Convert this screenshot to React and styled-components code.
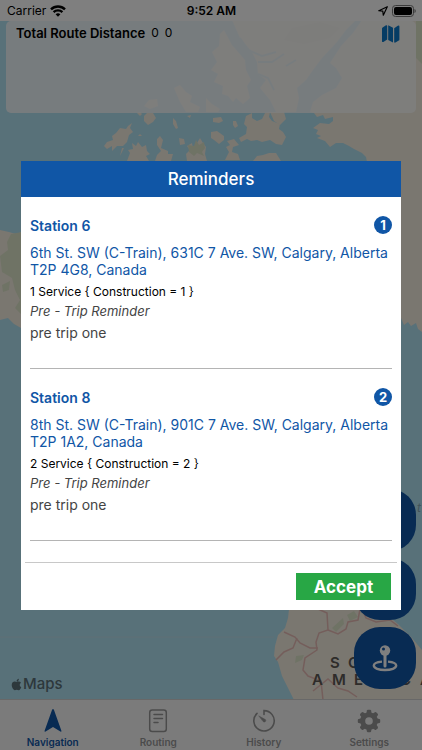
import React from 'react'
import styled, { createGlobalStyle, css } from 'styled-components'
import { FaApple } from 'react-icons/fa'

const colors = {
  brand: '#1056a6',
  water: '#b0e2f3',
  land: '#f4eee1',
  green: '#28a745',
  grey: '#979797'
}

const GlobalStyle = createGlobalStyle`
  * {
    box-sizing: border-box;
  }

  body {
    font-family: Inter, 'Liberation Sans', sans-serif;
    margin: 0;
  }

  h1, h2, p, ul, hr {
    margin: 0;
    padding: 0;
  }

  button {
    border: 0;
    cursor: pointer;
    font-family: inherit;
    padding: 0;
  }
`

const Screen = styled.div`
  background: ${colors.water};
  display: flex;
  flex-direction: column;
  min-height: 100vh;
  overflow: hidden;
  position: relative;
`

const MapCanvas = styled.svg`
  height: 100%;
  inset: 0;
  position: absolute;
  width: 100%;
`

const StatusBar = styled.header`
  align-items: center;
  background: #fff;
  color: #000;
  display: grid;
  font-size: 12px;
  grid-template-columns: 1fr auto 1fr;
  height: 21px;
  padding: 0 6px 0 7px;
  position: relative;
`

const StatusGroup = styled.div`
  align-items: center;
  display: flex;
  gap: 4px;
  justify-content: ${props => (props.$end ? 'flex-end' : 'flex-start')};
`

const Clock = styled.time`
  font-weight: 600;
`

const RouteCard = styled.section`
  background: rgba(255, 255, 255, 0.8);
  border-radius: 5px;
  display: flex;
  font-size: 13px;
  height: 92px;
  justify-content: space-between;
  line-height: 16px;
  margin: 0 6px;
  padding: 4px 16px 0 10px;
  position: relative;
`

const RouteDistance = styled.p`
  display: flex;
  gap: 6px;

  & > strong {
    font-weight: 600;
  }

  & > span {
    font-size: 12px;
  }
`

const MapButton = styled.button`
  background: none;
  color: #0a78c8;
  height: 18px;
  width: 18px;
`

const MapArea = styled.main`
  align-items: flex-end;
  display: flex;
  flex: 1;
  justify-content: space-between;
  padding: 0 6px 10px 10px;
  position: relative;
`

const MapCredit = styled.a`
  align-items: center;
  color: #5b7078;
  display: flex;
  font-size: 15px;
  font-weight: 500;
  line-height: 18px;
  margin-bottom: -4px;
  text-decoration: none;
`

const Fabs = styled.div`
  display: flex;
  flex-direction: column;
  gap: 7px;
`

const Fab = styled.button`
  align-items: center;
  background: ${colors.brand};
  border-radius: 26px;
  color: #fff;
  display: flex;
  height: 62px;
  justify-content: center;
  width: 62px;
`

const TabBar = styled.nav`
  background: #f7f7f7;
  border-top: 1px solid #d0d0d0;
  display: grid;
  grid-template-columns: repeat(4, 1fr);
  height: 51px;
  position: relative;
`

const Tab = styled.a`
  align-items: center;
  color: ${props => (props.$active ? colors.brand : colors.grey)};
  display: flex;
  flex-direction: column;
  font-size: 10px;
  font-weight: 600;
  gap: 3px;
  line-height: 12px;
  padding-top: 9px;
  text-decoration: none;
`

const Backdrop = styled.div`
  align-items: center;
  background: rgba(0, 0, 0, 0.5);
  display: flex;
  inset: 0;
  justify-content: center;
  padding: 21px 21px 0;
  position: absolute;
`

const Dialog = styled.div`
  background: #fff;
  width: 100%;
`

const DialogTitle = styled.h1`
  background: ${colors.brand};
  color: #fff;
  font-size: 17px;
  font-weight: 500;
  line-height: 36px;
  text-align: center;
`

const Reminders = styled.ul`
  list-style: none;
  padding: 0 9px;
`

const Reminder = styled.li`
  border-bottom: 1px solid #b4b4b4;
  padding: 18px 0 25px;
`

const ReminderHead = styled.div`
  align-items: center;
  color: ${colors.brand};
  display: flex;
  height: 20px;
  justify-content: space-between;
`

const Station = styled.h2`
  font-size: 14px;
  font-weight: 600;
`

const Badge = styled.span`
  background: ${colors.brand};
  border-radius: 50%;
  color: #fff;
  font-size: 13px;
  font-weight: 700;
  height: 18px;
  line-height: 18px;
  text-align: center;
  width: 18px;
`

const line = css`
  color: ${props => props.$color || '#000'};
`

const Address = styled.p`
  ${line}
  font-size: 14px;
  line-height: 17px;
  margin-top: 9px;
`

const Service = styled.p`
  ${line}
  font-size: 12px;
  line-height: 16px;
  margin-top: 6px;
`

const Kind = styled.p`
  ${line}
  font-size: 13px;
  font-style: italic;
  line-height: 18px;
  margin-top: 2px;
`

const Note = styled.p`
  ${line}
  font-size: 14px;
  line-height: 20px;
  margin-top: 3px;
`

const DialogFooter = styled.footer`
  border-top: 1px solid #c8c8c8;
  display: flex;
  justify-content: flex-end;
  margin: 21px 4px 0;
  padding: 10px 6px;
`

const Accept = styled.button`
  background: ${colors.green};
  color: #fff;
  font-size: 17px;
  font-weight: 700;
  height: 27px;
  width: 95px;
`

const WorldMap = () => (
  <MapCanvas viewBox="0 0 422 750" preserveAspectRatio="xMidYMid slice" aria-hidden="true">
    <rect width="422" height="750" fill={colors.water} />
    <g fill={colors.land}>
      {/* Greenland and the eastern edge */}
      <path d="M422 20H362L353 33 341 46 330 63 336 68 342 78 336 88 322 95 313 102 310 112 314 113 317 117 323 115 325 119 333 117 333 121 329 124 320 123 313 128 318 130 316 134 321 136 317 138 325 141 330 147 336 143 343 143 349 146 354 149 362 153 366 157 367 162H396V316L401 318 404 325 408 322 411 326 416 323 418 329 422 332Z" />
      {/* Ellesmere */}
      <path d="M232 20L240 38 252 52 257 62 258 74 266 80 260 88 270 100 276 112H296L299 98 297 88 306 80 313 70 322 58 337 42 346 30 356 20Z" />
      {/* Axel Heiberg */}
      <path d="M220 34L224 30 232 45 245 60 246 70 251 80 247 86 250 98 243 104 236 98 233 102 228 96 222 94 223 86 214 82 218 74 211 70 217 62 212 52 219 46Z" />
      {/* arctic islands */}
      <path d="M132 123L128 126 126 129 120 128 116 133 112 136 113 140 107 142 104 146 107 149 112 146 112 151 117 146 123 146 127 142 129 135 133 132 130 128Z" />
      <path d="M127 161L130 153 128 150 133 149 132 143 136 146 138 142 142 147 146 145 147 151 150 154 146 156 149 161Z" />
      <path d="M155 161L157 155 161 151 157 145 157 139 160 136 163 140 161 148 168 151 168 154 173 154 171 161Z" />
      <path d="M120 156L124 148 122 148ZM138 136h4l-2 -2ZM137 113l3 3 2-2-2-2Z" />
      <path d="M144 116L147 113 153 113 156 118 153 122 148 125 144 121Z" />
      <path d="M144 106L149 100 157 99 158 106 150 109ZM174 88L180 85 186 92 192 96 190 102 200 107 198 112H186L180 102ZM206 98l6 6 8 5-2 3-12 0Z" />
      <path d="M173 118L176 121 178 128 176 129 173 124ZM179 138L184 139 185 144 180 145ZM187 116L191 115 190 118Z" />
      <path d="M186 154L190 150 187 146 192 143 193 149 196 151 197 143 200 138 203 143 206 147 205 154 207 161H187Z" />
      <path d="M213 118L221 117 223 121 219 123 213 122ZM233 121L236 121 238 126 235 128 233 125ZM211 132L217 131 224 136 224 140 219 144 214 140 211 138ZM227 141L234 139 239 145 233 147 232 152 238 154 240 160H225L229 152 226 147 230 145Z" />
      <path d="M246 116L252 113 252 118 257 121 262 119 265 113 270 112 269 117 272 121 280 124 279 129 283 132 286 137 282 145 276 144 270 140 262 142 257 140 251 141 247 139 241 142 239 138 246 134 247 127 244 124Z" />
      <path d="M270 112H284L286 119 280 125 274 121Z" />
      <path d="M253 161L257 156 263 155 269 153 276 153 281 161Z" />
      {/* Alaska coast */}
      <path d="M0 230L9 232 16 234 22 232 28 232V332L21 328 14 324 8 318 0 320Z" />
      {/* South America */}
      <path d="M289 609L288 618 285 628 278 635 275 646 274 656 278 662 282 676 288 688 294 700H422V650L412 638 398 624 380 609Z" />
    </g>
    <g fill="#dfe6cb">
      <path d="M11 234L22 232V315L15 308 20 300 15 290 12 278 2 272 0 256 8 250 7 242ZM2 285L10 281 9 290 3 292Z" />
      <path d="M416 20H422V64L416 58Z" />
      <path d="M188 145L194 146 196 140 199 145 204 142 205 148 202 152 204 156 197 153 194 156 189 152Z" />
      <path d="M296 656L304 655 302 660 295 663ZM332 628L343 618 344 624 336 632ZM347 615L354 611 358 617 350 621Z" />
      <path d="M284 40L292 28 320 22 340 28 330 38 304 44Z" opacity="0.5" />
    </g>
    <g fill="none" stroke="#e9bcb6" strokeWidth="1.5">
      <path d="M318 609L327 613 328 630 319 633 316 642 317 650 305 658 303 670 308 676 321 681 323 700" />
      <path d="M284 632L295 637 300 643 310 648 318 648M297 638L293 648 284 652 276 660" />
      <path d="M328 630L338 634 346 629 348 622 358 620 360 609M313 691L328 679 338 688 348 691 357 697M362 609L366 618 376 622 390 620 398 626" />
    </g>
    <path d="M0 637h274" stroke="#bfe0ea" />
    <g stroke={colors.water} strokeWidth="2" fill="none">
      <path d="M240 38L248 50 262 56 276 52M258 62L272 62 284 54M258 74L268 78 274 90M286 66L296 60" />
    </g>
    <g fill="#5c5854" fontSize="15" fontWeight="600">
      <text x="330 348 368" y="668">SOU</text>
      <text x="312 332 354 372 390 400 420" y="685">AMERICA</text>
      <text x="417" y="512" fill="#86a9b5" fontSize="12" fontStyle="italic" fontWeight="400">t</text>
    </g>
  </MapCanvas>
)

const WifiIcon = () => (
  <svg width="16" height="12" viewBox="0 0 16 12" fill="none" stroke="currentColor" strokeWidth="2.4" aria-hidden="true">
    <path d="M1 4.300a10 10 0 0 1 14 0M3.600 7.200a6.300 6.300 0 0 1 8.800 0" />
    <path d="M5.600 9.200a3.600 3.600 0 0 1 4.800 0L8 11.700z" fill="currentColor" stroke="none" />
  </svg>
)

const LocationIcon = () => (
  <svg width="10" height="10" viewBox="0 0 10 10" fill="none" stroke="currentColor" strokeWidth="1.2" strokeLinejoin="round" aria-hidden="true">
    <path d="M9.300.700L.8 4.700l4 .5.500 4z" />
  </svg>
)

const BatteryIcon = () => (
  <svg width="24" height="12" viewBox="0 0 24 12" aria-hidden="true">
    <rect x="0.5" y="0.5" width="21" height="11" rx="3" fill="none" stroke="#777" />
    <rect x="2" y="2" width="18" height="8" rx="2" />
    <path d="M22.500 4v4c1.600-.6 1.600-3.400 0-4z" fill="#777" />
  </svg>
)

const FoldedMapIcon = () => (
  <svg width="18" height="18" viewBox="0 0 18 18" fill="currentColor" aria-hidden="true">
    <path d="M0 3.400Q0 2.800.6 2.400L4 .3Q5.200 0 5.200 1v13.600L1.400 17Q0 17.400 0 16.200zM6.200.2l4.800 2.600v14.800l-4.800-2.600zM12.200 3.200L15.800.8Q17.400 0 17.400 1.600v12.800q0 .8-.6 1.200L13.400 17.600q-1.200.4-1.200-.8z" />
  </svg>
)

const JoystickIcon = () => (
  <svg width="26" height="27" viewBox="0 0 26 27" fill="none" stroke="currentColor" aria-hidden="true">
    <path d="M10 16.600C5 17 1.800 18.700 1.800 20.600c0 2.600 5 4.400 11.200 4.400s11.200-1.800 11.200-4.400c0-1.900-3.200-3.600-8.200-4" strokeWidth="2.400" />
    <path d="M13 9v12" strokeWidth="3" strokeLinecap="round" />
    <circle cx="13" cy="5.500" r="5.200" fill="currentColor" stroke="none" />
    <circle cx="11.500" cy="4" r="1.500" fill={colors.brand} stroke="none" />
  </svg>
)

const NavigationIcon = () => (
  <svg width="24" height="24" viewBox="0 0 24 24" fill="currentColor" aria-hidden="true">
    <path d="M12 0Q11.500 0 11 1L3.600 21.800q-.3 1.300 1 .8L12 18l7.400 4.600q1.300.5 1-.8L13 1Q12.500 0 12 0z" />
  </svg>
)

const RoutingIcon = () => (
  <svg width="24" height="24" viewBox="0 0 24 24" fill="none" stroke="currentColor" strokeWidth="1.500" strokeLinecap="round" aria-hidden="true">
    <rect x="3.700" y="1" width="16.600" height="21.600" rx="2.500" />
    <path d="M8 5.500h8.500M8 9.500h8.500M8 13.500h4" />
  </svg>
)

const HistoryIcon = () => (
  <svg width="24" height="24" viewBox="0 0 24 24" fill="none" stroke="currentColor" strokeWidth="1.600" strokeLinecap="round" aria-hidden="true">
    <path d="M12 5.500V1.600A10.200 10.200 0 1 1 5 4.400" />
    <path d="M7 7l6.400 3.600a1.500 1.500 0 0 1-2 2.200z" fill="currentColor" strokeWidth="0.500" />
  </svg>
)

const SettingsIcon = () => (
  <svg width="24" height="24" viewBox="0 0 24 24" aria-hidden="true">
    <circle cx="12" cy="12" r="6.300" fill="none" stroke="currentColor" strokeWidth="5" />
    {[0, 45, 90, 135, 180, 225, 270, 315].map(angle => (
      <path key={angle} d="M9.200 5l.7-3.400q.2-.8 1-.8h2.200q.8 0 1 .8l.7 3.400z" fill="currentColor" transform={`rotate(${angle} 12 12)`} />
    ))}
  </svg>
)

const reminders = [
  {
    id: 1,
    station: 'Station 6',
    address: '6th St. SW (C-Train), 631C 7 Ave. SW, Calgary, Alberta T2P 4G8, Canada',
    service: '1 Service { Construction = 1 }'
  },
  {
    id: 2,
    station: 'Station 8',
    address: '8th St. SW (C-Train), 901C 7 Ave. SW, Calgary, Alberta T2P 1A2, Canada',
    service: '2 Service { Construction = 2 }'
  }
]

const tabs = [
  { label: 'Navigation', Icon: NavigationIcon },
  { label: 'Routing', Icon: RoutingIcon },
  { label: 'History', Icon: HistoryIcon },
  { label: 'Settings', Icon: SettingsIcon }
]

const App = () => (
  <Screen>
    <GlobalStyle />
    <WorldMap />
    <StatusBar>
      <StatusGroup>
        Carrier
        <WifiIcon />
      </StatusGroup>
      <Clock>9:52 AM</Clock>
      <StatusGroup $end>
        <LocationIcon />
        <BatteryIcon />
      </StatusGroup>
    </StatusBar>
    <RouteCard>
      <RouteDistance>
        <strong>Total Route Distance</strong>
        <span>0</span>
        <span>0</span>
      </RouteDistance>
      <MapButton aria-label="Show map">
        <FoldedMapIcon />
      </MapButton>
    </RouteCard>
    <MapArea>
      <MapCredit href="#maps">
        <FaApple size={13} aria-hidden="true" />
        Maps
      </MapCredit>
      <Fabs>
        <Fab aria-label="Directions" />
        <Fab aria-label="Stops" />
        <Fab aria-label="Locate">
          <JoystickIcon />
        </Fab>
      </Fabs>
    </MapArea>
    <TabBar>
      {tabs.map(({ label, Icon }, index) => (
        <Tab key={label} href={`#${label.toLowerCase()}`} $active={index === 0}>
          <Icon />
          {label}
        </Tab>
      ))}
    </TabBar>
    <Backdrop>
      <Dialog role="dialog" aria-modal="true" aria-labelledby="reminders-title">
        <DialogTitle id="reminders-title">Reminders</DialogTitle>
        <Reminders>
          {reminders.map(({ id, station, address, service }) => (
            <Reminder key={id}>
              <ReminderHead>
                <Station>{station}</Station>
                <Badge>{id}</Badge>
              </ReminderHead>
              <Address $color={colors.brand}>{address}</Address>
              <Service>{service}</Service>
              <Kind $color="#444">Pre - Trip Reminder</Kind>
              <Note $color="#444">pre trip one</Note>
            </Reminder>
          ))}
        </Reminders>
        <DialogFooter>
          <Accept>Accept</Accept>
        </DialogFooter>
      </Dialog>
    </Backdrop>
  </Screen>
)

export default App
